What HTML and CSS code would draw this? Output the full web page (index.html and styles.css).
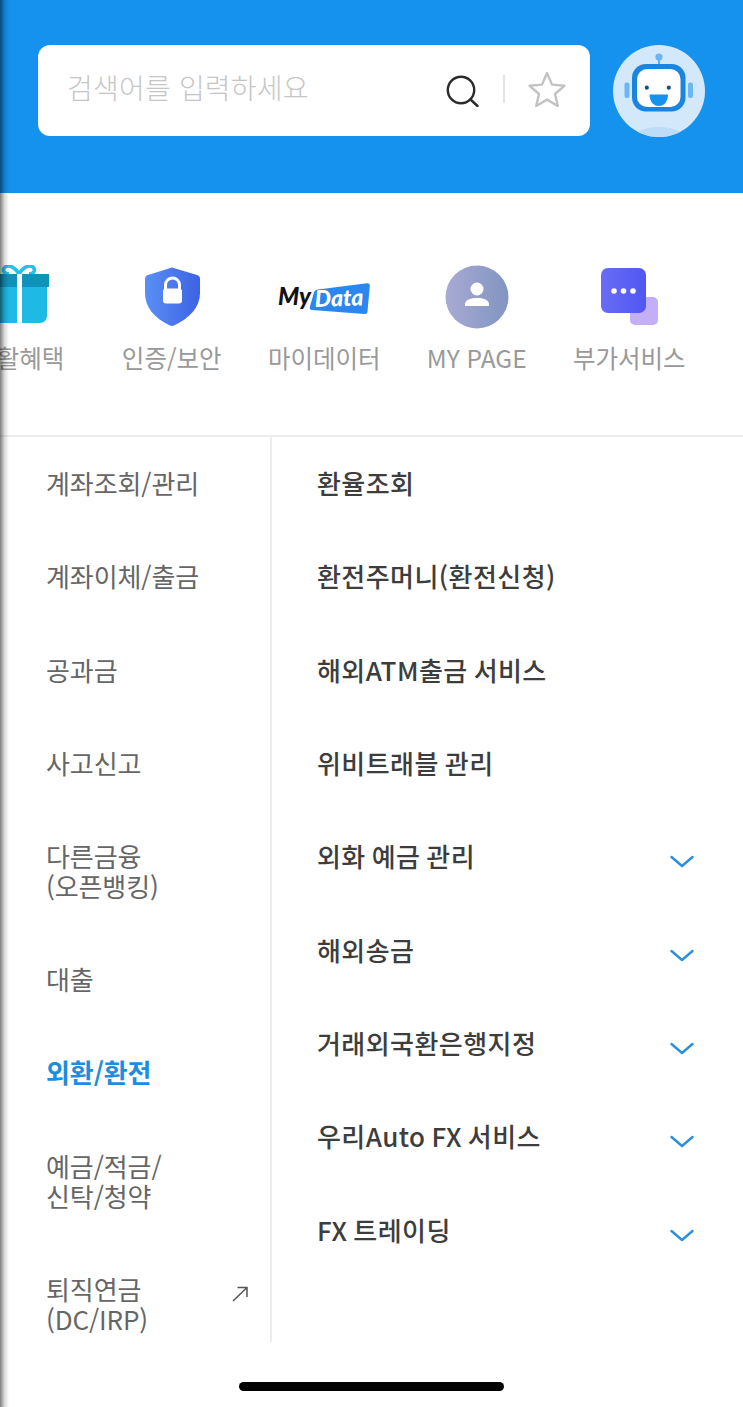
FILE: index.html
```html
<!DOCTYPE html>
<html lang="ko">
<head>
    <meta charset="UTF-8">
    <meta name="viewport" content="width=device-width, initial-scale=1.0">
    <title>전체메뉴</title>
    <link rel="stylesheet" href="styles.css">
</head>
<body>
    <div class="page">
        <header class="top">
            <div class="search">
                <span class="placeholder">검색어를 입력하세요</span>
                <svg class="search-icon" width="34" height="32" viewBox="0 0 34 32"><circle cx="15" cy="15" r="13.2" fill="none" stroke="#2b2b2b" stroke-width="2.4"/><path d="M24.5 24.5L31.5 31" fill="none" stroke="#2b2b2b" stroke-width="2.4" stroke-linecap="round"/></svg>
                <span class="divider"></span>
                <svg class="star-icon" width="38" height="36" viewBox="0 0 38 36"><path d="M19 2l5 11.600 12.400 1.200-9.400 8.200 2.800 12-10.800-6.400-10.800 6.400 2.800-12-9.400-8.200 12.400-1.200z" fill="none" stroke="#c3c3c3" stroke-width="2.400" stroke-linejoin="round"/></svg>
            </div>
            <svg class="bot" width="92" height="92" viewBox="0 0 92 92">
                <defs><clipPath id="botClip"><circle cx="46" cy="46" r="46"/></clipPath></defs>
                <circle cx="46" cy="46" r="46" fill="#d3e8fb"/>
                <ellipse cx="46" cy="97" rx="30" ry="15" fill="#bddcf7" clip-path="url(#botClip)"/>
                <path d="M46 14v7" stroke="#5fb0f0" stroke-width="2"/>
                <circle cx="46" cy="12" r="3.600" fill="#6bb6f2"/>
                <rect x="11.500" y="37.500" width="5" height="15.500" rx="2" fill="#6cb7f3"/>
                <rect x="75" y="37.500" width="5" height="15.500" rx="2" fill="#6cb7f3"/>
                <rect x="19" y="19" width="53.500" height="47.500" rx="14" fill="#1a84de"/>
                <rect x="24" y="24" width="43.500" height="38" rx="10" fill="#fff"/>
                <circle cx="33.800" cy="42.700" r="2.100" fill="#17507e"/>
                <circle cx="55.800" cy="42.700" r="2.100" fill="#17507e"/>
                <path d="M36.500 49.500h18.500c0 7-4 11.500-9.200 11.500s-9.300-4.500-9.300-11.500z" fill="#1492ee"/>
            </svg>
        </header>

        <nav class="shortcuts">
            <div class="shortcut">
                <svg class="shortcut-icon" width="60" height="64" viewBox="0 0 60 64">
                    <path d="M30 9C27 3 20-1 16 2c-3 3-1 7 4 7M30 9c3-6 10-10 14-7 3 3 1 7-4 7" fill="none" stroke="#2cbde8" stroke-width="3.600"/>
                    <path d="M2 22h56v29a7 7 0 0 1-7 7H2z" fill="#1fb9e6"/>
                    <rect x="0" y="9" width="60" height="13" fill="#0f93bb"/>
                    <rect x="28" y="9" width="5" height="49" fill="#fff"/>
                </svg>
                <span class="shortcut-label">생활혜택</span>
            </div>
            <div class="shortcut">
                <svg class="shortcut-icon" width="64" height="64" viewBox="0 0 64 64">
                    <defs><linearGradient id="shield" x1="0" x2="1" y1="0" y2="0"><stop offset="0" stop-color="#5a8ff6"/><stop offset="1" stop-color="#3d62e4"/></linearGradient></defs>
                    <path d="M32 2.500l25 7.500c2 .6 3 2 3 4v14c0 14-10 25-26 32.500-1.300.6-2.700.6-4 0C14 53 5 42 5 28V14c0-2 1-3.400 3-4z" fill="url(#shield)"/>
                    <path d="M25.500 24v-4a7 7 0 0 1 14 0v4" fill="none" stroke="#fff" stroke-width="3"/>
                    <rect x="23" y="23.500" width="19" height="15" rx="3" fill="#fff"/>
                </svg>
                <span class="shortcut-label">인증/보안</span>
            </div>
            <div class="shortcut">
                <svg class="shortcut-icon" width="92" height="64" viewBox="0 0 92 64">
                    <path d="M40 24.500L89 18.200c1.800-.2 3 .8 2.800 2.500L89.500 46.500c-.2 1.800-1.300 2.700-3 2.500L34 45c-1.800-.2-2.600-1.300-2.200-3L36 27.500c.4-1.800 2-2.800 4-3z" fill="#2b86ee"/>
                    <text class="mydata-my" x="0" y="40">My</text>
                    <text class="mydata-data" x="37" y="42" transform="rotate(-2 37 42)">Data</text>
                </svg>
                <span class="shortcut-label">마이데이터</span>
            </div>
            <div class="shortcut">
                <svg class="shortcut-icon" width="64" height="64" viewBox="0 0 64 64">
                    <defs><linearGradient id="person" x1="0" x2="1" y1="0" y2="0"><stop offset="0" stop-color="#a8aad4"/><stop offset="1" stop-color="#8195c0"/></linearGradient></defs>
                    <circle cx="32" cy="32" r="31.500" fill="url(#person)"/>
                    <circle cx="32" cy="24" r="6.500" fill="#fff"/>
                    <path d="M20 41v-1.500c0-4 4-6.500 12-6.500s12 2.500 12 6.500V41z" fill="#fff"/>
                </svg>
                <span class="shortcut-label">MY PAGE</span>
            </div>
            <div class="shortcut">
                <svg class="shortcut-icon" width="64" height="64" viewBox="0 0 64 64">
                    <defs><linearGradient id="extra" x1="0" x2="1" y1="0" y2="0"><stop offset="0" stop-color="#6a6cf5"/><stop offset="1" stop-color="#4f57f2"/></linearGradient></defs>
                    <rect x="33" y="32" width="28" height="28" rx="5" fill="#c3aff8"/>
                    <rect x="4" y="3" width="45" height="45" rx="7" fill="url(#extra)"/>
                    <circle cx="17" cy="26" r="2.800" fill="#fff"/>
                    <circle cx="26.500" cy="26" r="2.800" fill="#fff"/>
                    <circle cx="36" cy="26" r="2.800" fill="#fff"/>
                </svg>
                <span class="shortcut-label">부가서비스</span>
            </div>
        </nav>

        <main class="menu">
            <ul class="menu-left">
                <li>계좌조회/관리</li>
                <li>계좌이체/출금</li>
                <li>공과금</li>
                <li>사고신고</li>
                <li>다른금융<br>(오픈뱅킹)</li>
                <li>대출</li>
                <li class="active">외환/환전</li>
                <li>예금/적금/<br>신탁/청약</li>
                <li class="external">
                    <span>퇴직연금<br>(DC/IRP)</span>
                    <svg class="arrow" width="16" height="16" viewBox="0 0 16 16"><path d="M1 15L15 1.500M5.500 1.500H15V11" fill="none" stroke="#555" stroke-width="1.500"/></svg>
                </li>
            </ul>
            <ul class="menu-right">
                <li>환율조회</li>
                <li>환전주머니(환전신청)</li>
                <li>해외ATM출금 서비스</li>
                <li>위비트래블 관리</li>
                <li>외화 예금 관리<svg class="chevron" width="24" height="13" viewBox="0 0 24 13"><path d="M1.500 2l10.500 9L22.500 2" fill="none" stroke="#2a8fdc" stroke-width="2.400" stroke-linecap="round" stroke-linejoin="round"/></svg></li>
                <li>해외송금<svg class="chevron" width="24" height="13" viewBox="0 0 24 13"><path d="M1.500 2l10.500 9L22.500 2" fill="none" stroke="#2a8fdc" stroke-width="2.400" stroke-linecap="round" stroke-linejoin="round"/></svg></li>
                <li>거래외국환은행지정<svg class="chevron" width="24" height="13" viewBox="0 0 24 13"><path d="M1.500 2l10.500 9L22.500 2" fill="none" stroke="#2a8fdc" stroke-width="2.400" stroke-linecap="round" stroke-linejoin="round"/></svg></li>
                <li>우리Auto FX 서비스<svg class="chevron" width="24" height="13" viewBox="0 0 24 13"><path d="M1.500 2l10.500 9L22.500 2" fill="none" stroke="#2a8fdc" stroke-width="2.400" stroke-linecap="round" stroke-linejoin="round"/></svg></li>
                <li>FX 트레이딩<svg class="chevron" width="24" height="13" viewBox="0 0 24 13"><path d="M1.500 2l10.500 9L22.500 2" fill="none" stroke="#2a8fdc" stroke-width="2.400" stroke-linecap="round" stroke-linejoin="round"/></svg></li>
            </ul>
        </main>

        <footer class="home-bar"><span class="home-indicator"></span></footer>
        <div class="edge-shadow"></div>
    </div>
</body>
</html>
```

FILE: styles.css
```css
* {
    box-sizing: border-box;
}
body {
    margin: 0;
    background-color: #fff;
    font-family: "Noto Sans CJK KR", "Noto Sans", sans-serif;
}
ul {
    list-style: none;
    margin: 0;
    padding: 0;
}
.page {
    position: relative;
    height: 1407px;
    overflow: hidden;
    display: flex;
    flex-direction: column;
}
.top {
    flex: none;
    height: 193px;
    background-color: #1492ee;
    display: flex;
    align-items: flex-start;
    padding: 45px 38px 0;
    gap: 23px;
}
.search {
    width: 553px;
    height: 91px;
    background-color: #fff;
    border-radius: 12px;
    display: flex;
    align-items: center;
    padding: 0 24px 0 29px;
}
.placeholder {
    flex: 1;
    font-size: 28px;
    letter-spacing: 0.2px;
    color: #c6c6c6;
    font-weight: 300;
    margin-top: -8px;
}
.search-icon {
    margin-top: 1px;
}
.divider {
    width: 2px;
    height: 28px;
    background-color: #e3e3e3;
    margin: -4px 23px 0 23px;
}
.star-icon {
    margin-top: -3px;
}
.bot {
    flex: none;
}
.shortcuts {
    flex: none;
    height: 244px;
    display: flex;
    margin-left: -57px;
    padding-top: 72px;
    border-bottom: 2px solid #ececec;
}
.shortcut {
    flex: none;
    width: 152.5px;
    display: flex;
    flex-direction: column;
    align-items: center;
}
.shortcut-icon {
    height: 64px;
}
.shortcut-label {
    margin-top: 12px;
    font-size: 24.5px;
    line-height: 34px;
    color: #999;
    white-space: nowrap;
}
.mydata-my {
    font-family: Lato, sans-serif;
    font-size: 24px;
    font-weight: 900;
    font-style: italic;
    fill: #111;
}
.mydata-data {
    font-family: Lato, sans-serif;
    font-size: 23px;
    font-weight: 900;
    font-style: italic;
    fill: #fff;
}
.menu {
    flex: none;
    height: 905px;
    display: flex;
    overflow: hidden;
}
.menu-left {
    flex: none;
    width: 272px;
    border-right: 2px solid #ececec;
    padding-left: 46px;
    font-size: 26px;
    color: #666;
}
.menu-left li {
    padding: 31.2px 0 32px;
    line-height: 30px;
    letter-spacing: -0.1px;
}
.menu-left .active {
    color: #1f8ddd;
    font-weight: 700;
}
.external {
    display: flex;
    justify-content: space-between;
    align-items: flex-start;
    padding-right: 22px !important;
}
.arrow {
    margin-top: 12px;
}
.menu-right {
    flex: 1;
    padding: 0 49px 0 45px;
    font-size: 26px;
    font-weight: 500;
    color: #3d3d3d;
}
.menu-right li {
    height: 93.3px;
    padding-bottom: 2px;
    display: flex;
    align-items: center;
    justify-content: space-between;
    letter-spacing: 0.45px;
    word-spacing: -1.8px;
}
.chevron {
    margin-top: 12px;
}
.home-bar {
    flex: 1;
    display: flex;
    justify-content: center;
    padding-top: 40px;
}
.home-indicator {
    width: 265px;
    height: 9px;
    border-radius: 5px;
    background-color: #000;
}
.edge-shadow {
    position: absolute;
    left: 0;
    top: 0;
    bottom: 0;
    width: 9px;
    background: linear-gradient(to right, rgba(0, 0, 0, 0.5), rgba(0, 0, 0, 0.15) 50%, rgba(0, 0, 0, 0));
    pointer-events: none;
}
```
